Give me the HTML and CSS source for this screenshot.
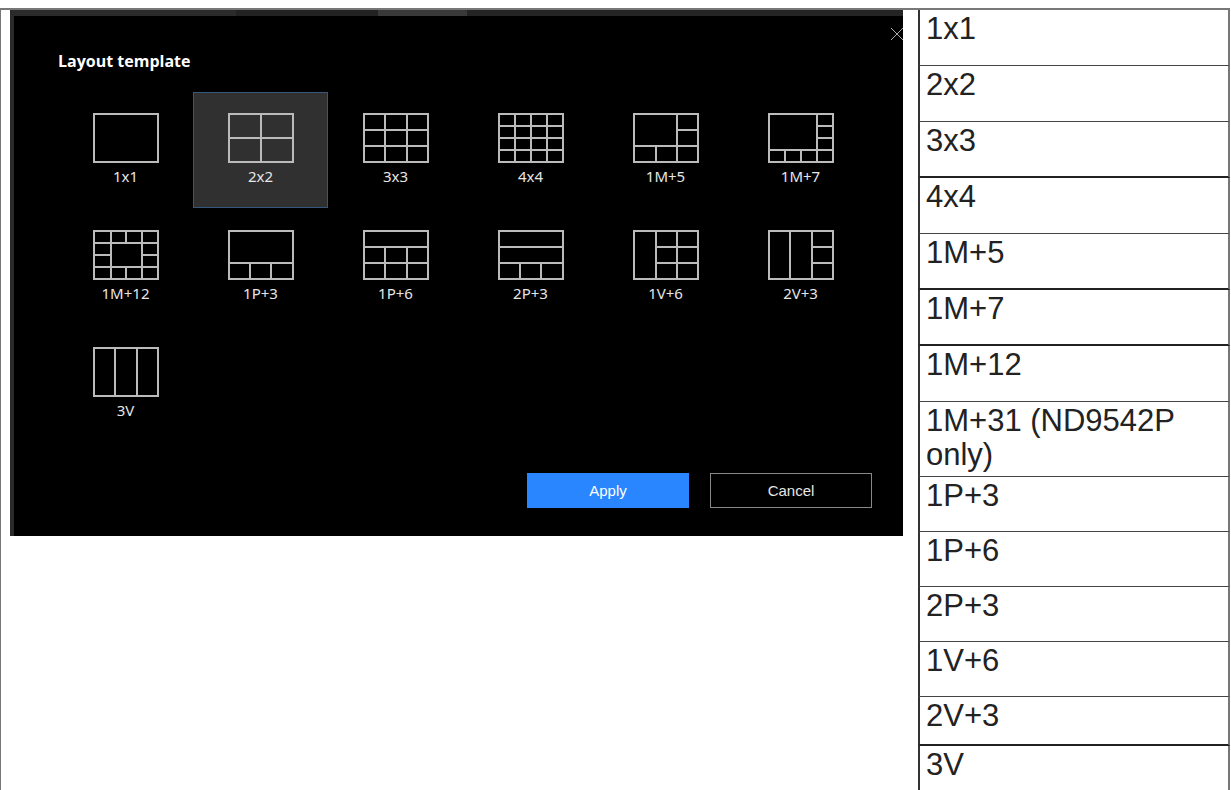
FILE: index.html
```
<!DOCTYPE html>
<html lang="en">
<head>
<meta charset="utf-8">
<title>Layout template</title>
<link rel="stylesheet" href="styles.css">
</head>
<body>
<table class="doc">
  <colgroup><col><col class="names"></colgroup>
  <tbody>
    <tr>
      <td class="figure" rowspan="14">
        <section class="dialog" aria-labelledby="dialog-title">
          <button class="close" type="button" aria-label="Close">
            <svg viewBox="0 0 14 14"><path d="M1 1L13 13M13 1L1 13"/></svg>
          </button>
          <h1 class="title" id="dialog-title">Layout template</h1>
          <div class="tiles">
            <button class="tile" type="button"><svg class="icon" viewBox="0 0 66 50"><path d="M1 1H65V49H1Z"/></svg><span>1x1</span></button>
            <button class="tile selected" type="button" aria-pressed="true"><svg class="icon" viewBox="0 0 66 50"><path d="M1 1H65V49H1ZM33 1V49M1 25H65"/></svg><span>2x2</span></button>
            <button class="tile" type="button"><svg class="icon" viewBox="0 0 66 50"><path d="M1 1H65V49H1ZM22 1V49M44 1V49M1 17H65M1 33H65"/></svg><span>3x3</span></button>
            <button class="tile" type="button"><svg class="icon" viewBox="0 0 66 50"><path d="M1 1H65V49H1ZM17 1V49M33 1V49M49 1V49M1 13H65M1 25H65M1 37H65"/></svg><span>4x4</span></button>
            <button class="tile" type="button"><svg class="icon" viewBox="0 0 66 50"><path d="M1 1H65V49H1ZM44 1V49M44 17H65M1 33H65M23 33V49"/></svg><span>1M+5</span></button>
            <button class="tile" type="button"><svg class="icon" viewBox="0 0 66 50"><path d="M1 1H65V49H1ZM49 1V49M49 13H65M49 25H65M1 37H65M17 37V49M33 37V49"/></svg><span>1M+7</span></button>
            <button class="tile" type="button"><svg class="icon" viewBox="0 0 66 50"><path d="M1 1H65V49H1ZM18 1V49M49 1V49M1 13H65M1 37H65M1 25H18M49 25H65M33 1V13M33 37V49"/></svg><span>1M+12</span></button>
            <button class="tile" type="button"><svg class="icon" viewBox="0 0 66 50"><path d="M1 1H65V49H1ZM1 33H65M22 33V49M43 33V49"/></svg><span>1P+3</span></button>
            <button class="tile" type="button"><svg class="icon" viewBox="0 0 66 50"><path d="M1 1H65V49H1ZM1 17H65M1 33H65M22 17V49M44 17V49"/></svg><span>1P+6</span></button>
            <button class="tile" type="button"><svg class="icon" viewBox="0 0 66 50"><path d="M1 1H65V49H1ZM1 17H65M1 33H65M22 33V49M43 33V49"/></svg><span>2P+3</span></button>
            <button class="tile" type="button"><svg class="icon" viewBox="0 0 66 50"><path d="M1 1H65V49H1ZM23 1V49M44 1V49M23 17H65M23 33H65"/></svg><span>1V+6</span></button>
            <button class="tile" type="button"><svg class="icon" viewBox="0 0 66 50"><path d="M1 1H65V49H1ZM22 1V49M44 1V49M44 17H65M44 33H65"/></svg><span>2V+3</span></button>
            <button class="tile" type="button"><svg class="icon" viewBox="0 0 66 50"><path d="M1 1H65V49H1ZM22 1V49M44 1V49"/></svg><span>3V</span></button>
          </div>
          <div class="actions">
            <button class="action apply" type="button">Apply</button>
            <button class="action cancel" type="button">Cancel</button>
          </div>
        </section>
      </td>
      <td class="name">1x1</td>
    </tr>
    <tr><td class="name">2x2</td></tr>
    <tr><td class="name strong">3x3</td></tr>
    <tr><td class="name">4x4</td></tr>
    <tr><td class="name strong">1M+5</td></tr>
    <tr><td class="name strong">1M+7</td></tr>
    <tr><td class="name">1M+12</td></tr>
    <tr><td class="name">1M+31 (ND9542P only)</td></tr>
    <tr><td class="name snug">1P+3</td></tr>
    <tr><td class="name snug">1P+6</td></tr>
    <tr><td class="name snug">2P+3</td></tr>
    <tr><td class="name snug">1V+6</td></tr>
    <tr><td class="name short strong">2V+3</td></tr>
    <tr><td class="name last">3V</td></tr>
  </tbody>
</table>
</body>
</html>
```
FILE: styles.css
```
* { box-sizing: border-box; }

body {
  margin: 0;
  padding: 8px 1px 0 0;
  background: #fff;
  color: #222;
  font-family: "Liberation Sans", Arial, sans-serif;
}

button {
  margin: 0;
  padding: 0;
  border: 0;
  background: none;
  color: inherit;
  font: inherit;
}

.doc {
  width: 100%;
  border-collapse: separate;
  border-spacing: 0;
  table-layout: fixed;
  border-top: 2px solid #777;
  border-left: 1px solid #777;
}

.names { width: 312px; }

.figure {
  padding: 0 15px 0 9px;
  vertical-align: top;
}

.name {
  height: 56px;
  padding: 2px 6px 4px;
  border-bottom: 1px solid #444;
  border-left: 2px solid #333;
  border-right: 2px solid #777;
  font-size: 31px;
  line-height: 34px;
  vertical-align: top;
}

.snug { height: 55px; }
.short { height: 49px; }
.strong { border-bottom: 2px solid #222; }
.last { height: 44px; border-bottom: 0; }

.dialog {
  position: relative;
  overflow: hidden;
  padding: 35px 31px 28px 44px;
  border-left: 4px solid #2a2a2a;
  background: #000 linear-gradient(90deg, #2b2b2b 25%, #222 25% 41%, #393939 41% 51%, #242424 51%) top / 100% 6px no-repeat;
  color: #e6e6e6;
}

.close {
  position: absolute;
  top: 17px;
  right: -1px;
  width: 14px;
  height: 14px;
}

.close svg {
  display: block;
  fill: none;
  stroke: #aaa;
}

.title {
  margin: 0;
  color: #fff;
  font: bold 16px/32px "Open Sans", "Noto Sans", sans-serif;
}

.tiles {
  display: grid;
  grid-template-columns: repeat(6, 1fr);
  grid-auto-rows: 116px;
  row-gap: 1px;
  margin: 15px 4px 0 0;
}

.tile {
  display: flex;
  flex-direction: column;
  align-items: center;
  padding-top: 20px;
  border: 1px solid transparent;
  font: 15px/24px "Noto Sans", "Open Sans", sans-serif;
}

.selected {
  border-color: #35577c;
  background: #303030;
}

.icon {
  width: 66px;
  height: 50px;
  margin-bottom: 1px;
  fill: none;
  stroke: #bbb;
  stroke-width: 2;
}

.actions {
  display: flex;
  justify-content: flex-end;
  gap: 21px;
  margin-top: 31px;
}

.action {
  width: 162px;
  height: 35px;
  font-size: 15px;
}

.apply { background: #2a86ff; color: #fff; }
.cancel { border: 1px solid #888; }
```
